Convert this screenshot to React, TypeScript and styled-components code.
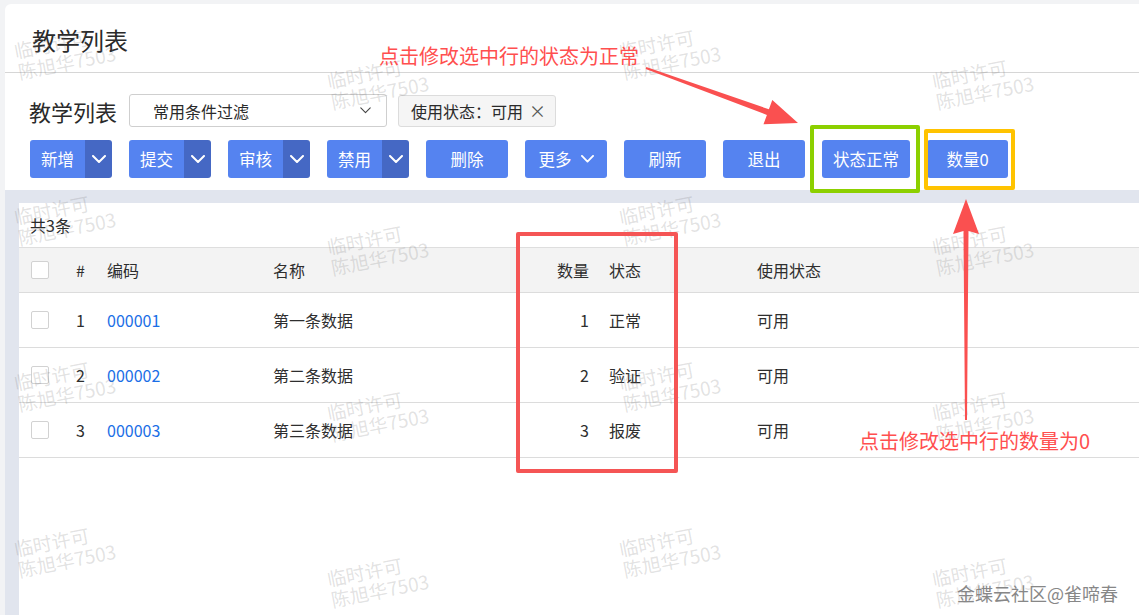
import React from 'react';
import styled, { createGlobalStyle } from 'styled-components';

const GlobalStyle = createGlobalStyle`
  html, body { margin: 0; padding: 0; }
  body {
    background: #f2f3f5;
    font-family: "Noto Sans CJK SC", "Noto Sans", sans-serif;
    color: #333;
    overflow: hidden;
  }
  * { box-sizing: border-box; }
`;

const Page = styled.div`
  position: relative;
  width: 1139px;
  height: 615px;
  padding: 4px 0 0 5px;
  overflow: hidden;
`;

const Card = styled.div`
  height: 611px;
  background: #fff;
  border-radius: 6px 0 0 0;
  display: flex;
  flex-direction: column;
`;

const TitleBar = styled.div`
  height: 69px;
  border-bottom: 1px solid #d6d6d6;
  display: flex;
  align-items: center;
  padding: 4px 0 0 27px;
  font-size: 24px;
  line-height: 30px;
  color: #2a2a2a;
`;

const FilterRow = styled.div`
  margin-top: 21px;
  height: 33px;
  display: flex;
  align-items: center;
  gap: 11px;
  padding-left: 24px;
`;

const FilterLabel = styled.div`
  font-size: 22px;
  line-height: 28px;
  color: #2a2a2a;
  width: 89px;
`;

const Select = styled.div`
  width: 258px;
  height: 33px;
  border: 1px solid #cfcfcf;
  border-radius: 3px;
  display: flex;
  align-items: center;
  justify-content: space-between;
  padding: 0 15px 0 23px;
  font-size: 16px;
  color: #2a2a2a;
`;

const Tag = styled.div`
  width: 158px;
  height: 32px;
  margin-top: 1px;
  border: 1px solid #dcdcdc;
  border-radius: 3px;
  background: #f5f5f5;
  display: flex;
  align-items: center;
  justify-content: space-between;
  padding: 0 9px 0 12px;
  font-size: 16px;
  color: #2a2a2a;
`;

const TagClose = styled.span`
  font-size: 17px;
  line-height: 20px;
  color: #555;
`;

const ButtonRow = styled.div`
  margin-top: 13px;
  height: 38px;
  display: flex;
  gap: 17px;
  padding-left: 25px;
`;

const SplitButton = styled.div`
  width: 82px;
  height: 38px;
  display: flex;
  border-radius: 3px;
  overflow: hidden;
`;

const ButtonMain = styled.div`
  flex: 1;
  background: #5583f0;
  color: #fff;
  font-size: 16.5px;
  display: flex;
  align-items: center;
  justify-content: center;
`;

const ButtonDrop = styled.div`
  width: 27px;
  background: #4568c4;
  display: flex;
  align-items: center;
  justify-content: center;
`;

const Button = styled.div<{ $w?: number }>`
  width: ${(p) => p.$w ?? 82}px;
  height: 38px;
  border-radius: 3px;
  background: #5583f0;
  color: #fff;
  font-size: 16.5px;
  display: flex;
  align-items: center;
  justify-content: center;
  gap: 9px;
`;

const Band = styled.div`
  margin-top: 12px;
  flex: 1;
  background: #e1e5ee;
  padding: 13px 0 0 14px;
  display: flex;
`;

const TableCard = styled.div`
  flex: 1;
  background: #fff;
  display: flex;
  flex-direction: column;
`;

const Summary = styled.div`
  height: 44px;
  display: flex;
  align-items: center;
  padding-left: 11px;
  font-size: 16px;
  color: #2a2a2a;
`;

const Row = styled.div<{ $header?: boolean }>`
  display: grid;
  grid-template-columns: 45px 32px 166px 193px 143px 148px 1fr;
  height: ${(p) => (p.$header ? 46 : 55)}px;
  background: ${(p) => (p.$header ? '#f3f3f3' : '#fff')};
  border-top: ${(p) => (p.$header ? '1px solid #dedede' : 'none')};
  border-bottom: 1px solid #dcdcdc;
  font-size: 16px;
  color: #2e2e2e;
`;

const Cell = styled.div<{ $right?: boolean; $pad?: number; $link?: boolean }>`
  display: flex;
  align-items: center;
  justify-content: ${(p) => (p.$right ? 'flex-end' : 'flex-start')};
  padding-left: ${(p) => (p.$right ? 0 : p.$pad ?? 11)}px;
  padding-right: ${(p) => (p.$right ? 9 : 0)}px;
  color: ${(p) => (p.$link ? '#1a6ee6' : 'inherit')};
  white-space: nowrap;
`;

const Checkbox = styled.div`
  width: 18px;
  height: 18px;
  border: 1px solid #d2d2d2;
  border-radius: 2px;
  background: #fff;
`;

const Watermark = styled.div`
  position: absolute;
  font-size: 19px;
  line-height: 21px;
  color: rgba(110, 110, 110, 0.2);
  transform: rotate(-11deg);
  transform-origin: 0 10px;
  white-space: nowrap;
  pointer-events: none;
`;

const Note = styled.div`
  position: absolute;
  font-size: 20px;
  line-height: 24px;
  color: #ff4f4f;
  white-space: nowrap;
`;

const Frame = styled.div<{ $color: string }>`
  position: absolute;
  border: 4px solid ${(p) => p.$color};
  border-radius: 2px;
  pointer-events: none;
`;

const Arrows = styled.svg`
  position: absolute;
  left: 0;
  top: 0;
  pointer-events: none;
`;

const Credit = styled.div`
  position: absolute;
  right: 21px;
  top: 581px;
  font-size: 18px;
  line-height: 24px;
  color: #878787;
  text-shadow: 0 0 2px #fff;
`;

const Chevron = ({ color, w, sw }: { color: string; w: number; sw: number }) => (
  <svg width={w} height={w / 2 + 1} viewBox="0 0 14 8">
    <path d="M1 1 L7 7 L13 1" fill="none" stroke={color} strokeWidth={sw} strokeLinecap="round" strokeLinejoin="round" />
  </svg>
);

const split = ['新增', '提交', '审核', '禁用'];

const rows = [
  { no: 1, code: '000001', name: '第一条数据', qty: 1, st: '正常', use: '可用' },
  { no: 2, code: '000002', name: '第二条数据', qty: 2, st: '验证', use: '可用' },
  { no: 3, code: '000003', name: '第三条数据', qty: 3, st: '报废', use: '可用' },
];

const wmCols = [
  { x: 14, ys: [50, 216, 382, 548] },
  { x: 327, ys: [80, 246, 412, 578] },
  { x: 619, ys: [50, 216, 382, 548] },
  { x: 932, ys: [80, 246, 412, 578] },
];

export default function App() {
  return (
    <Page>
      <GlobalStyle />
      <Card>
        <TitleBar>教学列表</TitleBar>
        <FilterRow>
          <FilterLabel>教学列表</FilterLabel>
          <Select>
            <span>常用条件过滤</span>
            <Chevron color="#444" w={11} sw={1.4} />
          </Select>
          <Tag>
            <span>使用状态：可用</span>
            <TagClose>×</TagClose>
          </Tag>
        </FilterRow>
        <ButtonRow>
          {split.map((t) => (
            <SplitButton key={t}>
              <ButtonMain>{t}</ButtonMain>
              <ButtonDrop>
                <Chevron color="#fff" w={14} sw={2} />
              </ButtonDrop>
            </SplitButton>
          ))}
          <Button>删除</Button>
          <Button>
            <span>更多</span>
            <Chevron color="#fff" w={13} sw={2} />
          </Button>
          <Button>刷新</Button>
          <Button>退出</Button>
          <Button $w={88}>状态正常</Button>
          <Button $w={81}>数量0</Button>
        </ButtonRow>
        <Band>
          <TableCard>
            <Summary>共3条</Summary>
            <Row $header>
              <Cell $pad={12}><Checkbox /></Cell>
              <Cell $pad={12}>#</Cell>
              <Cell>编码</Cell>
              <Cell>名称</Cell>
              <Cell $right>数量</Cell>
              <Cell>状态</Cell>
              <Cell>使用状态</Cell>
            </Row>
            {rows.map((r) => (
              <Row key={r.no}>
                <Cell $pad={12}><Checkbox /></Cell>
                <Cell $pad={12}>{r.no}</Cell>
                <Cell $link>{r.code}</Cell>
                <Cell>{r.name}</Cell>
                <Cell $right>{r.qty}</Cell>
                <Cell>{r.st}</Cell>
                <Cell>{r.use}</Cell>
              </Row>
            ))}
          </TableCard>
        </Band>
      </Card>

      {wmCols.map((c) =>
        c.ys.map((y) => (
          <Watermark key={`${c.x}-${y}`} style={{ left: c.x, top: y - 10 }}>
            临时许可
            <br />
            陈旭华7503
          </Watermark>
        ))
      )}

      <Frame $color="#f55555" style={{ left: 516, top: 232, width: 162, height: 241 }} />
      <Frame $color="#8cd000" style={{ left: 810, top: 125, width: 110, height: 68 }} />
      <Frame $color="#ffc300" style={{ left: 924, top: 129, width: 91, height: 61 }} />

      <Note style={{ left: 379, top: 44 }}>点击修改选中行的状态为正常</Note>
      <Note style={{ left: 859, top: 429 }}>点击修改选中行的数量为0</Note>

      <Arrows width={1139} height={615} viewBox="0 0 1139 615">
        <polygon
          fill="#fa5050"
          points="646.3,67.1 768.9,109.3 772.3,99.9 798,123 763.5,124.3 766.9,114.9 645.7,68.9"
        />
        <polygon
          fill="#fa5050"
          points="965,420 963.5,231 953,234 966,199 979,234 968.5,231 967,420"
        />
      </Arrows>

      <Credit>金蝶云社区@雀啼春</Credit>
    </Page>
  );
}
